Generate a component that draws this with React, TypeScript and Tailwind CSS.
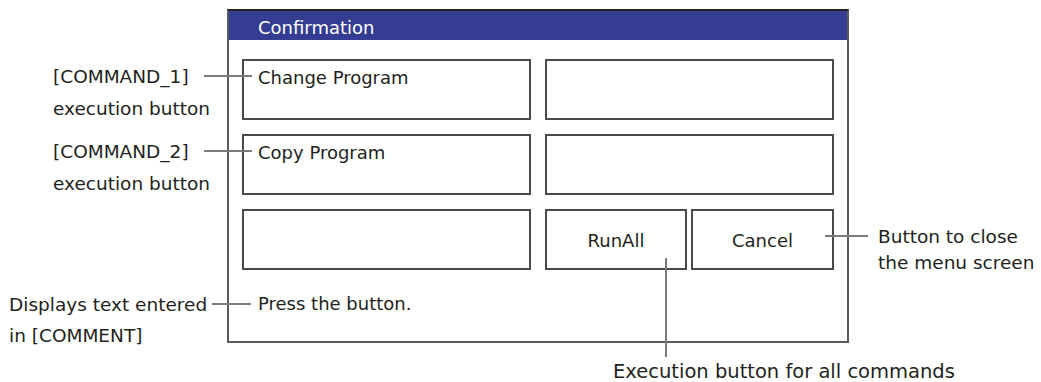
const font = { fontFamily: '"DejaVu Sans", Verdana, sans-serif' };

function Box(props: { label?: string; center?: boolean }) {
  return (
    <div
      className={
        "h-[61px] border-2 border-[#4a4a4a] bg-white text-[18px] text-[#231f20] " +
        (props.center ? "flex items-center justify-center pt-[2px]" : "pl-[14px] pt-[6px] leading-[22px]")
      }
    >
      {props.label}
    </div>
  );
}

function Callout(props: { className: string; lines: string[] }) {
  return (
    <div className={"absolute whitespace-nowrap text-[#231f20] " + props.className}>
      {props.lines.map((l) => (
        <div key={l}>{l}</div>
      ))}
    </div>
  );
}

export default function App() {
  return (
    <div className="relative h-[382px] w-[1041px] overflow-hidden bg-white" style={font}>
      {/* dialog */}
      <div className="ml-[227px] mt-[9px] flex h-[334px] w-[622px] flex-col border-2 border-t-[#222] border-[#5a5a5a] bg-white">
        <div className="flex h-[29px] items-center bg-[#343d92] pl-[29px] pt-[3px] text-[18px] text-white">
          Confirmation
        </div>
        <div className="mt-[19px] grid grid-cols-[289px_289px] gap-x-[14px] gap-y-[14px] pl-[13px]">
          <Box label="Change Program" />
          <Box />
          <Box label="Copy Program" />
          <Box />
          <Box />
          <div className="grid grid-cols-[142px_143px] gap-x-[4px]">
            <Box label="RunAll" center />
            <Box label="Cancel" center />
          </div>
        </div>
        <div className="mt-[23px] pl-[29px] text-[18px] leading-[22px] text-[#231f20]">Press the button.</div>
      </div>

      {/* callouts */}
      <Callout className="left-[53px] top-[61px] text-[18.5px] leading-[32px]" lines={["[COMMAND_1]", "execution button"]} />
      <Callout className="left-[53px] top-[136px] text-[18.5px] leading-[32px]" lines={["[COMMAND_2]", "execution button"]} />
      <Callout className="left-[9px] top-[289px] text-[18.5px] leading-[31px]" lines={["Displays text entered", "in [COMMENT]"]} />
      <Callout className="left-[878px] top-[224px] text-[18.5px] leading-[26px]" lines={["Button to close", "the menu screen"]} />
      <Callout className="left-[613px] top-[361px] text-[19.5px] leading-[22px]" lines={["Execution button for all commands"]} />

      {/* leader lines */}
      <div className="absolute left-[204px] top-[75px] h-[2px] w-[48px] bg-[#7a7a7a]" />
      <div className="absolute left-[204px] top-[150px] h-[2px] w-[48px] bg-[#7a7a7a]" />
      <div className="absolute left-[212px] top-[303px] h-[2px] w-[39px] bg-[#7a7a7a]" />
      <div className="absolute left-[825px] top-[235px] h-[2px] w-[43px] bg-[#7a7a7a]" />
      <div className="absolute left-[665px] top-[258px] h-[99px] w-[2px] bg-[#7a7a7a]" />
    </div>
  );
}
